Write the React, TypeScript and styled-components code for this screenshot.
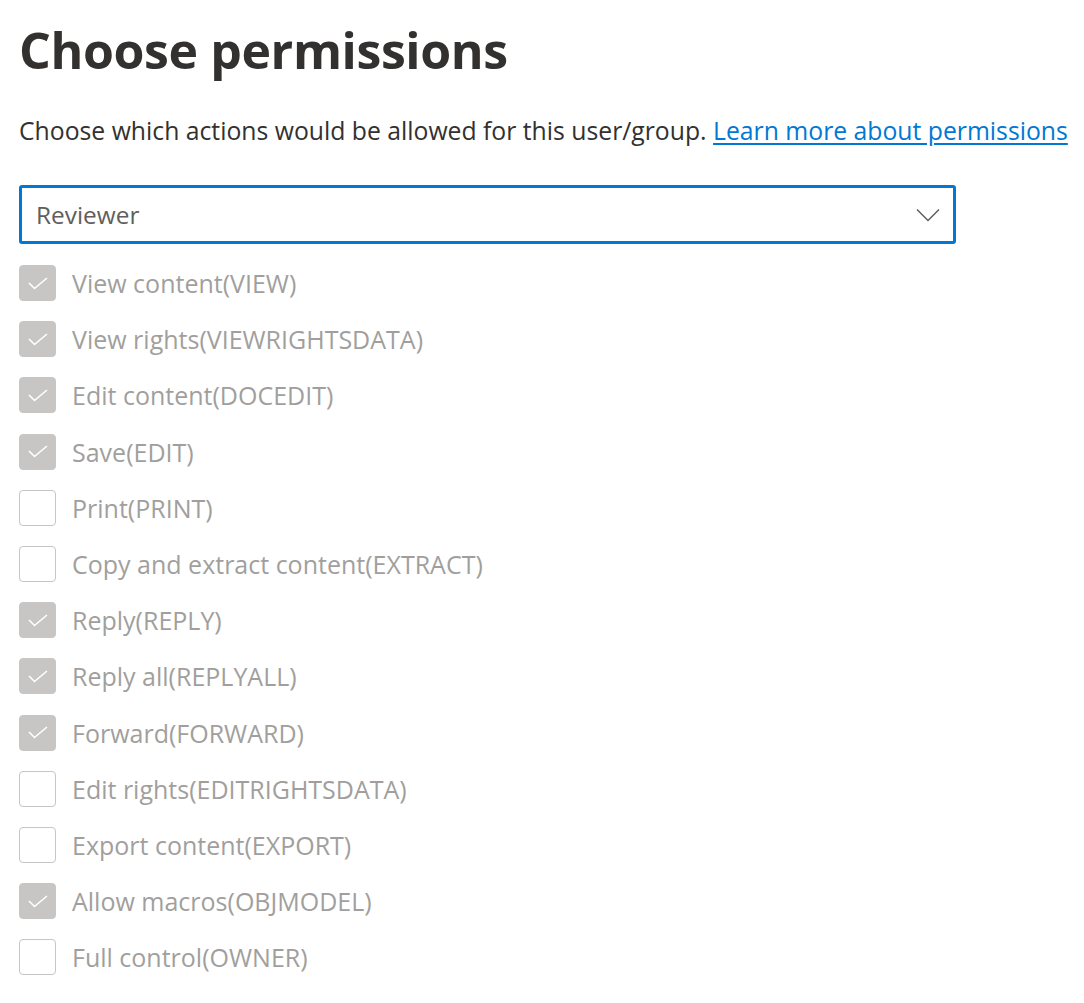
import React from 'react';
import styled, { createGlobalStyle } from 'styled-components';

const GlobalStyle = createGlobalStyle`
  html, body {
    margin: 0;
    padding: 0;
    background: #ffffff;
  }
  body {
    font-family: "Open Sans", "Noto Sans", sans-serif;
    color: #323130;
  }
`;

const Page = styled.div`
  padding: 14px 0 0 19px;
`;

const Title = styled.h1`
  margin: 0;
  font-size: 50px;
  font-weight: 700;
  line-height: 72px;
  letter-spacing: -0.4px;
  color: #323130;
`;

const Intro = styled.p`
  margin: 29px 0 0 0;
  font-size: 24.75px;
  line-height: 32px;
  color: #323130;
  white-space: nowrap;
`;

const Link = styled.a`
  color: #0078d4;
  text-decoration: underline;
  text-underline-offset: 3px;
`;

const Dropdown = styled.div`
  margin-top: 38px;
  width: 937px;
  height: 59px;
  box-sizing: border-box;
  border: 3px solid #0078d4;
  border-radius: 3px;
  display: flex;
  align-items: center;
  justify-content: space-between;
  padding: 0 13px 0 14px;
`;

const DropdownText = styled.span`
  font-size: 24.4px;
  color: #605e5c;
`;

const List = styled.div`
  margin-top: 21px;
  display: flex;
  flex-direction: column;
  gap: 20.2px;
`;

const Row = styled.label`
  display: flex;
  align-items: center;
  gap: 16px;
  height: 36px;
`;

const Box = styled.span<{ checked: boolean }>`
  width: 37px;
  height: 36px;
  box-sizing: border-box;
  border-radius: 4px;
  border: 1px solid #c8c6c4;
  background: ${({ checked }) => (checked ? '#c8c6c4' : '#ffffff')};
  display: flex;
  align-items: center;
  justify-content: center;
  flex-shrink: 0;
`;

const Label = styled.span`
  font-size: 25px;
  color: #a19f9d;
  white-space: nowrap;
`;

const permissions: [string, boolean][] = [
  ['View content(VIEW)', true],
  ['View rights(VIEWRIGHTSDATA)', true],
  ['Edit content(DOCEDIT)', true],
  ['Save(EDIT)', true],
  ['Print(PRINT)', false],
  ['Copy and extract content(EXTRACT)', false],
  ['Reply(REPLY)', true],
  ['Reply all(REPLYALL)', true],
  ['Forward(FORWARD)', true],
  ['Edit rights(EDITRIGHTSDATA)', false],
  ['Export content(EXPORT)', false],
  ['Allow macros(OBJMODEL)', true],
  ['Full control(OWNER)', false],
];

const Check = () => (
  <svg width="20" height="13" viewBox="0 0 20 13" fill="none">
    <path d="M1 6 L6.5 11.5 L19 1" stroke="#ffffff" strokeWidth="1.6" />
  </svg>
);

const Chevron = () => (
  <svg width="24" height="14" viewBox="0 0 24 14" fill="none">
    <path d="M1 1.5 L12 12.5 L23 1.5" stroke="#605e5c" strokeWidth="1.5" />
  </svg>
);

export default function App() {
  return (
    <Page>
      <GlobalStyle />
      <Title>Choose permissions</Title>
      <Intro>
        Choose which actions would be allowed for this user/group.{' '}
        <Link href="#">Learn more about permissions</Link>
      </Intro>
      <Dropdown>
        <DropdownText>Reviewer</DropdownText>
        <Chevron />
      </Dropdown>
      <List>
        {permissions.map(([name, checked]) => (
          <Row key={name}>
            <Box checked={checked}>{checked && <Check />}</Box>
            <Label>{name}</Label>
          </Row>
        ))}
      </List>
    </Page>
  );
}
